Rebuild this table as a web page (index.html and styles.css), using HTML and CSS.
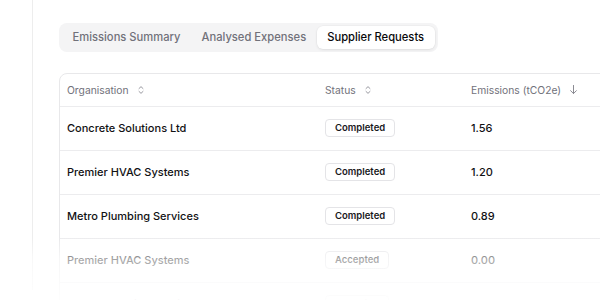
FILE: index.html
```html
<!DOCTYPE html>
<html>
<head>
<meta charset="utf-8">
<link rel="stylesheet" href="styles.css">
</head>
<body>
<div class="page">
  <aside class="sidebar"></aside>
  <main class="main">
    <nav class="tabs">
      <span class="tab">Emissions Summary</span>
      <span class="tab">Analysed Expenses</span>
      <span class="tab active">Supplier Requests</span>
    </nav>
    <div class="card">
      <table class="grid">
        <colgroup><col class="c-org"><col class="c-status"><col class="c-em"></colgroup>
        <thead>
          <tr>
            <th><span class="th-in">Organisation <svg class="sort" viewBox="0 0 10 12" width="8" height="10"><path d="M2.5 4.2 5 1.8l2.5 2.4M2.5 7.8 5 10.2l2.5-2.4" fill="none" stroke="currentColor" stroke-width="1.1" stroke-linecap="round" stroke-linejoin="round"/></svg></span></th>
            <th><span class="th-in">Status <svg class="sort" viewBox="0 0 10 12" width="8" height="10"><path d="M2.5 4.2 5 1.8l2.5 2.4M2.5 7.8 5 10.2l2.5-2.4" fill="none" stroke="currentColor" stroke-width="1.1" stroke-linecap="round" stroke-linejoin="round"/></svg></span></th>
            <th><span class="th-in">Emissions (tCO2e) <svg class="sort down" viewBox="0 0 10 12" width="9" height="11"><path d="M5 1.5v9M1.8 7.3 5 10.5l3.2-3.2" fill="none" stroke="currentColor" stroke-width="1.1" stroke-linecap="round" stroke-linejoin="round"/></svg></span></th>
          </tr>
        </thead>
        <tbody>
          <tr><td>Concrete Solutions Ltd</td><td><span class="badge">Completed</span></td><td>1.56</td></tr>
          <tr><td>Premier HVAC Systems</td><td><span class="badge">Completed</span></td><td>1.20</td></tr>
          <tr><td>Metro Plumbing Services</td><td><span class="badge">Completed</span></td><td>0.89</td></tr>
          <tr><td>Premier HVAC Systems</td><td><span class="badge">Accepted</span></td><td>0.00</td></tr>
          <tr><td>Metro Plumbing Services</td><td><span class="badge">Accepted</span></td><td>0.00</td></tr>
        </tbody>
      </table>
    </div>
  </main>
  <div class="fade"></div>
</div>
</body>
</html>
```

FILE: styles.css
```css
* { box-sizing: border-box; }
html, body { margin: 0; background: #fff; }
body {
  font-family: Inter, "Noto Sans", "Liberation Sans", sans-serif;
  color: #09090b;
}
.page {
  position: relative;
  display: flex;
  width: 600px;
  height: 300px;
  overflow: hidden;
}
.sidebar {
  flex: 0 0 33px;
  height: 290px;
  border-right: 1px solid #ededed;
}
.main {
  flex: 1;
  padding: 23px 0 0 26px;
  min-width: 0;
}
.tabs {
  display: inline-flex;
  align-items: center;
  height: 29px;
  padding: 3px;
  background: #f4f4f5;
  border-radius: 8px;
}
.tab {
  display: inline-block;
  padding: 0 10.5px;
  height: 23px;
  line-height: 23px;
  font-size: 11.2px;
  font-weight: 500;
  color: #71717a;
  white-space: nowrap;
}
.tab.active {
  background: #fff;
  color: #09090b;
  border-radius: 6px;
  box-shadow: 0 1px 3px rgba(0,0,0,0.08), 0 0 0 0.5px rgba(0,0,0,0.03);
}
.card {
  margin-top: 21px;
  width: 620px;
  border: 1px solid #e8e8ea;
  border-radius: 8px;
  overflow: hidden;
}
.grid {
  width: 100%;
  border-collapse: collapse;
  table-layout: fixed;
}
.c-org { width: 258px; }
.c-status { width: 146px; }
th {
  height: 32px;
  padding: 0 7px;
  text-align: left;
  font-size: 10.3px;
  font-weight: 400;
  color: #71717a;
  border-bottom: 1px solid #ececee;
}
.th-in { display: inline-flex; align-items: center; gap: 8px; }
.sort { color: #8a8a92; }
td {
  height: 44px;
  padding: 0 7px;
  font-size: 11px;
  font-weight: 500;
  color: #111113;
  border-bottom: 1px solid #ececee;
  white-space: nowrap;
}
.badge {
  display: inline-block;
  padding: 0 9px;
  height: 18px;
  line-height: 16px;
  border: 1px solid #e4e4e7;
  border-radius: 4px;
  font-size: 9.5px;
  font-weight: 600;
  color: #18181b;
}
.fade {
  position: absolute;
  left: 0;
  right: 0;
  top: 0;
  bottom: 0;
  pointer-events: none;
  background: linear-gradient(to bottom,
    rgba(255,255,255,0) 0px,
    rgba(255,255,255,0) 237px,
    rgba(255,255,255,0.62) 259px,
    rgba(255,255,255,0.93) 300px);
}
```
